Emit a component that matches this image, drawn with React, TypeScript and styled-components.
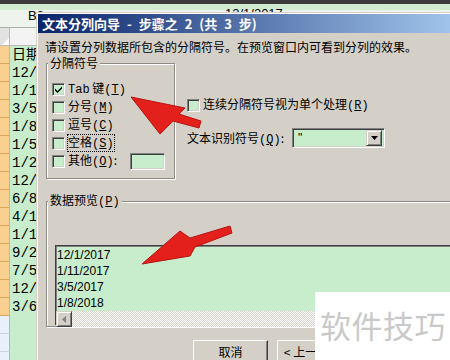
import styled, { createGlobalStyle } from "styled-components";

const GlobalStyle = createGlobalStyle`
  html, body {
    margin: 0;
    padding: 0;
    background: #d4d0c8;
  }
  body {
    font-family: "Noto Sans CJK SC", "Liberation Sans", sans-serif;
  }
`;

const Screen = styled.div`
  position: relative;
  width: 450px;
  height: 360px;
  overflow: hidden;
  background: #fff;
`;

/* ---------- spreadsheet behind the dialog ---------- */

const Sheet = styled.div`
  display: flex;
  flex-direction: column;
  height: 100%;
  & > * {
    flex-shrink: 0;
  }
`;

const TopStrip = styled.div`
  height: 4px;
  background: #3b3b3b;
`;

const FormulaBar = styled.div`
  height: 23px;
  display: flex;
  align-items: flex-start;
  background: linear-gradient(#d2ead2 0 6px, #eef3ee 6px);
  border-bottom: 1px solid #a8b2a8;
  font-family: "Liberation Sans", sans-serif;
  font-size: 13px;
  color: #000;
`;

const NameBox = styled.div`
  width: 70px;
  padding: 4px 0 0 28px;
  line-height: 16px;
`;

const FormulaText = styled.div`
  margin-left: 127px;
  line-height: 14px;
  padding-top: 3px;
`;

const HeaderRow = styled.div`
  height: 18px;
  display: flex;
  border-bottom: 1px solid #b9b9b9;
  box-sizing: border-box;
`;

const Corner = styled.div`
  width: 10px;
  background: #e2e2e2;
  border-right: 1px solid #b9b9b9;
  box-sizing: border-box;
  display: flex;
  align-items: flex-end;
  justify-content: flex-end;
`;

const ColHead = styled.div`
  width: 27px;
  background: #f3f3f3;
`;

const Row = styled.div`
  height: 18px;
  display: flex;
`;

const CellA = styled.div<{ $filled: boolean }>`
  width: 10px;
  box-sizing: border-box;
  background: ${(p) => (p.$filled ? "#f9d08f" : "#eaf0fa")};
  border-bottom: 1px solid ${(p) => (p.$filled ? "#d8a65c" : "#c9d3e3")};
  border-right: 1px solid #b7b7b7;
`;

const CellB = styled.div`
  width: 27px;
  overflow: hidden;
  background: #c7edcc;
  white-space: nowrap;
  padding-left: 2px;
  box-sizing: border-box;
  font-family: "Liberation Mono", "Noto Sans CJK SC", monospace;
  font-size: 14px;
  line-height: 18px;
  color: #000;
`;

/* ---------- dialog window ---------- */

const Dialog = styled.div`
  position: absolute;
  left: 36px;
  top: 12px;
  width: 440px;
  height: 380px;
  background: #d4d0c8;
  border-top: 1px solid #d4d0c8;
  border-left: 1px solid #d4d0c8;
  box-shadow: inset 1px 1px #fff;
  padding: 1px 0 0 1px;
  box-sizing: border-box;
  font-size: 12px;
  color: #000;
`;

const TitleBar = styled.div`
  height: 19px;
  background: linear-gradient(to right, #0a246a, #a6caf0 98%);
  color: #fff;
  font-weight: bold;
  font-size: 13px;
  line-height: 19px;
  padding-left: 4px;
  word-spacing: 4px;
  white-space: nowrap;
`;

const Body = styled.div`
  display: flex;
  flex-direction: column;
  padding: 7px 0 0 0;
`;

const Intro = styled.div`
  padding-left: 7px;
  line-height: 14px;
  white-space: nowrap;
`;

const OptionsRow = styled.div`
  display: flex;
  margin-top: 2px;
  margin-left: 8px;
`;

const Group = styled.fieldset<{ $w: string; $h: number }>`
  margin: 0;
  padding: 0;
  width: ${(p) => p.$w};
  height: ${(p) => p.$h}px;
  box-sizing: border-box;
  border: 1px solid #8d8a84;
  box-shadow: inset 1px 1px #fff, 1px 1px #fff;
  min-width: 0;
`;

const Legend = styled.legend`
  padding: 0 2px;
  margin-left: 1px;
  line-height: 14px;
  background: #d4d0c8;
  position: relative;
`;

const DelimiterList = styled.div`
  display: flex;
  flex-direction: column;
  padding: 10px 0 0 5px;
`;

const CheckRow = styled.div`
  height: 18px;
  display: flex;
  align-items: center;
  gap: 3px;
  white-space: nowrap;
`;

const Box = styled.span`
  width: 13px;
  height: 13px;
  box-sizing: border-box;
  background: #c7edcc;
  border: 1px solid;
  border-color: #808080 #fff #fff #808080;
  box-shadow: inset 1px 1px #404040, inset -1px -1px #d4d0c8;
  display: flex;
  align-items: center;
  justify-content: center;
  flex-shrink: 0;
`;

const Label = styled.span<{ $focus?: boolean }>`
  line-height: 14px;
  outline: ${(p) => (p.$focus ? "1px dotted #000" : "none")};
  outline-offset: 0;
`;

const Mono = styled.span`
  font-family: "Liberation Mono", monospace;
`;

const SmallInput = styled.span`
  width: 35px;
  height: 17px;
  margin-left: 10px;
  box-sizing: border-box;
  background: #c7edcc;
  border: 1px solid;
  border-color: #808080 #fff #fff #808080;
  box-shadow: inset 1px 1px #404040, inset -1px -1px #d4d0c8;
`;

const RightColumn = styled.div`
  display: flex;
  flex-direction: column;
  padding-top: 40px;
  margin-left: 12px;
`;

const QualifierRow = styled.div`
  display: flex;
  align-items: center;
  margin-top: 14px;
`;

const QualifierLabel = styled.span`
  width: 105px;
  white-space: nowrap;
`;

const Select = styled.div`
  width: 93px;
  height: 20px;
  box-sizing: border-box;
  background: #c7edcc;
  border: 1px solid;
  border-color: #808080 #fff #fff #808080;
  box-shadow: inset 1px 1px #404040, inset -1px -1px #d4d0c8;
  display: flex;
  align-items: center;
  padding: 2px;
  font-family: "Liberation Sans", sans-serif;
`;

const SelectValue = styled.span`
  flex: 1;
  padding-left: 3px;
  line-height: 14px;
`;

const DropButton = styled.span`
  width: 16px;
  height: 16px;
  box-sizing: border-box;
  background: #d4d0c8;
  border: 1px solid;
  border-color: #d4d0c8 #404040 #404040 #d4d0c8;
  box-shadow: inset 1px 1px #fff, inset -1px -1px #808080;
  display: flex;
  align-items: center;
  justify-content: center;
`;

const PreviewGroup = styled(Group)`
  margin: 14px 0 0 8px;
  border-right: none;
`;

const Preview = styled.div`
  height: 80px;
  margin: 36px 0 0 8px;
  display: flex;
  flex-direction: column;
  border-top: 1px solid #404040;
  border-left: 1px solid #404040;
  box-shadow: inset 1px 1px #808080;
  background: #c7edcc;
  box-sizing: border-box;
`;

const PreviewLines = styled.div`
  flex: 1;
  padding: 1px 0 0 1px;
  font-family: "Liberation Sans", sans-serif;
  font-size: 12px;
  line-height: 16px;
`;

const HScroll = styled.div`
  height: 16px;
  display: flex;
  background: repeating-conic-gradient(#fff 0 25%, #d4d0c8 0 50%) 0 0 / 2px 2px;
`;

const ButtonRow = styled.div`
  display: flex;
  gap: 9px;
  margin: 13px 0 0 155px;
`;

const Button = styled.div`
  width: 75px;
  height: 23px;
  box-sizing: border-box;
  border: 1px solid;
  border-color: #fff #404040 #404040 #fff;
  box-shadow: inset -1px -1px #808080;
  display: flex;
  align-items: center;
  justify-content: center;
  line-height: 14px;
  white-space: nowrap;
`;

/* ---------- overlays ---------- */

const Arrows = styled.svg`
  position: absolute;
  left: 0;
  top: 0;
  width: 450px;
  height: 360px;
  pointer-events: none;
`;

const Watermark = styled.div`
  position: absolute;
  right: 0;
  bottom: 0;
  width: 135px;
  height: 68px;
  background: #fff;
  display: flex;
  align-items: center;
  padding: 0 0 4px 5px;
  box-sizing: border-box;
  color: #c9c9c9;
  font-size: 31px;
  letter-spacing: 0.5px;
  white-space: nowrap;
`;

const cells = [
  "日期",
  "12/1/2017",
  "1/11/2017",
  "3/5/2017",
  "1/8/2018",
  "1/5/2018",
  "1/2/2018",
  "12/6/2017",
  "6/8/2017",
  "4/1/2017",
  "1/1/2018",
  "9/2/2017",
  "7/5/2017",
  "12/9/2017",
  "3/6/2018",
  "",
  "",
  "",
];

const Check = ({ checked = false }: { checked?: boolean }) => (
  <Box>
    {checked && (
      <svg width="9" height="9" viewBox="0 0 9 9">
        <path d="M1 3.5 L3.5 6 L8 1.5 L8 3.5 L3.5 8 L1 5.5 Z" fill="#000" />
      </svg>
    )}
  </Box>
);

const Hot = ({ k }: { k: string }) => (
  <Mono>
    (<u>{k}</u>)
  </Mono>
);

const App = () => {
  return (
    <Screen>
      <GlobalStyle />
      <Sheet>
        <TopStrip />
        <FormulaBar>
          <NameBox>B8</NameBox>
          <FormulaText>12/1/2017</FormulaText>
        </FormulaBar>
        <HeaderRow>
          <Corner>
            <svg width="7" height="7" viewBox="0 0 7 7">
              <path d="M7 0 L7 7 L0 7 Z" fill="#fff" />
            </svg>
          </Corner>
          <ColHead />
        </HeaderRow>
        {cells.map((c, i) => (
          <Row key={i}>
            <CellA $filled={i < 15} />
            <CellB>{c}</CellB>
          </Row>
        ))}
      </Sheet>

      <Dialog>
        <TitleBar>文本分列向导 - 步骤之 2 (共 3 步)</TitleBar>
        <Body>
          <Intro>请设置分列数据所包含的分隔符号。在预览窗口内可看到分列的效果。</Intro>
          <OptionsRow>
            <Group $w="129px" $h={123}>
              <Legend>分隔符号</Legend>
              <DelimiterList>
                <CheckRow>
                  <Check checked />
                  <Label>
                    <Mono>Tab</Mono> 键<Hot k="T" />
                  </Label>
                </CheckRow>
                <CheckRow>
                  <Check />
                  <Label>
                    分号<Hot k="M" />
                  </Label>
                </CheckRow>
                <CheckRow>
                  <Check />
                  <Label>
                    逗号<Hot k="C" />
                  </Label>
                </CheckRow>
                <CheckRow>
                  <Check />
                  <Label $focus>
                    空格<Hot k="S" />
                  </Label>
                </CheckRow>
                <CheckRow>
                  <Check />
                  <Label>
                    其他<Hot k="O" />:
                  </Label>
                  <SmallInput />
                </CheckRow>
              </DelimiterList>
            </Group>
            <RightColumn>
              <CheckRow>
                <Check />
                <Label>
                  连续分隔符号视为单个处理<Hot k="R" />
                </Label>
              </CheckRow>
              <QualifierRow>
                <QualifierLabel>
                  文本识别符号<Hot k="Q" />:
                </QualifierLabel>
                <Select>
                  <SelectValue>"</SelectValue>
                  <DropButton>
                    <svg width="7" height="4" viewBox="0 0 7 4">
                      <path d="M0 0 L7 0 L3.5 4 Z" fill="#000" />
                    </svg>
                  </DropButton>
                </Select>
              </QualifierRow>
            </RightColumn>
          </OptionsRow>

          <PreviewGroup $w="420px" $h={134}>
            <Legend>
              数据预览<Hot k="P" />
            </Legend>
            <Preview>
              <PreviewLines>
                <div>12/1/2017</div>
                <div>1/11/2017</div>
                <div>3/5/2017</div>
                <div>1/8/2018</div>
              </PreviewLines>
              <HScroll>
                <DropButton>
                  <svg width="4" height="7" viewBox="0 0 4 7">
                    <path d="M4 0 L4 7 L0 3.5 Z" fill="#808080" />
                  </svg>
                </DropButton>
              </HScroll>
            </Preview>
          </PreviewGroup>

          <ButtonRow>
            <Button>取消</Button>
            <Button>&lt; 上一步(B)</Button>
          </ButtonRow>
        </Body>
      </Dialog>

      <Arrows viewBox="0 0 450 360">
        <polygon
          points="131,97 185,108 179,114 201,121 199,128 173,121 160,134"
          fill="#e3201b"
          stroke="#b81410"
          strokeWidth="1"
          strokeLinejoin="round"
        />
        <polygon
          points="142,264 180,231 190,238 230,226 232,233 195,247 190,256"
          fill="#e3201b"
          stroke="#b81410"
          strokeWidth="1"
          strokeLinejoin="round"
        />
      </Arrows>

      <Watermark>软件技巧</Watermark>
    </Screen>
  );
};

export default App;
